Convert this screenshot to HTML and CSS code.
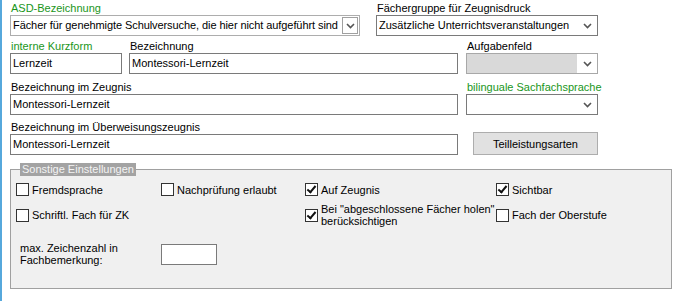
FILE: index.html
```html
<!DOCTYPE html>
<html lang="de">
<head>
    <meta charset="UTF-8">
    <title>Fach bearbeiten</title>
    <link rel="stylesheet" href="styles.css">
</head>
<body>
    <div class="panel">
        <!-- Zeile 1 -->
        <div class="row row-1">
            <div class="field w-asd">
                <label class="green">ASD-Bezeichnung</label>
                <div class="select light">
                    <span class="value tight">Fächer für genehmigte Schulversuche, die hier nicht aufgeführt sind</span>
                    <span class="drop-btn">
                        <svg width="9" height="6" viewBox="0 0 9 6"><path d="M1 1 L4.5 4.5 L8 1" fill="none" stroke="#555" stroke-width="1.6"/></svg>
                    </span>
                </div>
            </div>
            <div class="field w-gruppe">
                <label>Fächergruppe für Zeugnisdruck</label>
                <div class="select">
                    <span class="value">Zusätzliche Unterrichtsveranstaltungen</span>
                    <span class="arrow">
                        <svg width="9" height="6" viewBox="0 0 9 6"><path d="M1 1 L4.5 4.5 L8 1" fill="none" stroke="#555" stroke-width="1.6"/></svg>
                    </span>
                </div>
            </div>
        </div>

        <!-- Zeile 2 -->
        <div class="row row-2">
            <div class="field w-kurz">
                <label class="green">interne Kurzform</label>
                <div class="input">Lernzeit</div>
            </div>
            <div class="field w-bez">
                <label>Bezeichnung</label>
                <div class="input">Montessori-Lernzeit</div>
            </div>
            <div class="field w-right">
                <label>Aufgabenfeld</label>
                <div class="select disabled">
                    <span class="value"></span>
                    <span class="arrow white">
                        <svg width="9" height="6" viewBox="0 0 9 6"><path d="M1 1 L4.5 4.5 L8 1" fill="none" stroke="#555" stroke-width="1.6"/></svg>
                    </span>
                </div>
            </div>
        </div>

        <!-- Zeile 3 -->
        <div class="row row-3">
            <div class="field w-wide">
                <label>Bezeichnung im Zeugnis</label>
                <div class="input">Montessori-Lernzeit</div>
            </div>
            <div class="field w-right">
                <label class="green">bilinguale Sachfachsprache</label>
                <div class="select">
                    <span class="value"></span>
                    <span class="arrow">
                        <svg width="9" height="6" viewBox="0 0 9 6"><path d="M1 1 L4.5 4.5 L8 1" fill="none" stroke="#555" stroke-width="1.6"/></svg>
                    </span>
                </div>
            </div>
        </div>

        <!-- Zeile 4 -->
        <div class="row row-4">
            <div class="field w-wide">
                <label>Bezeichnung im Überweisungszeugnis</label>
                <div class="input">Montessori-Lernzeit</div>
            </div>
            <button class="btn">Teilleistungsarten</button>
        </div>

        <fieldset class="group">
            <legend>Sonstige Einstellungen</legend>
            <div class="checks">
                <div class="check"><span class="box"></span>Fremdsprache</div>
                <div class="check"><span class="box"></span>Nachprüfung erlaubt</div>
                <div class="check"><span class="box checked"></span>Auf Zeugnis</div>
                <div class="check"><span class="box checked"></span>Sichtbar</div>

                <div class="check"><span class="box"></span>Schriftl. Fach für ZK</div>
                <div></div>
                <div class="check"><span class="box checked"></span><span>Bei "abgeschlossene Fächer holen"<br>berücksichtigen</span></div>
                <div class="check"><span class="box"></span>Fach der Oberstufe</div>

                <div class="max-label">max. Zeichenzahl in<br>Fachbemerkung:</div>
                <div class="input small"></div>
            </div>
        </fieldset>
    </div>
</body>
</html>
```

FILE: styles.css
```css
body {
    margin: 0;
    background-color: white;
    font-family: 'Liberation Sans', Arial, sans-serif;
    font-size: 11px;
    color: #000;
}

.panel {
    border-left: 2px solid #56a8dc;
    min-height: 301px;
    box-sizing: border-box;
    padding: 2px 0 0 8px;
}

.row {
    display: flex;
    align-items: flex-start;
}

.row-2 { margin-top: 4px; }
.row-3 { margin-top: 7px; }
.row-4 { margin-top: 6px; }

.field {
    display: flex;
    flex-direction: column;
}

.field label {
    height: 13px;
    line-height: 13px;
    padding-left: 1px;
    white-space: nowrap;
}

.green {
    color: #1a961a;
}

.w-asd { width: 350px; margin-right: 16px; }
.w-gruppe { width: 222px; }
.w-kurz { width: 112px; margin-right: 7px; }
.w-bez { width: 329px; margin-right: 8px; }
.w-wide { width: 448px; margin-right: 8px; }
.w-right { width: 132px; }

.input,
.select {
    height: 21px;
    box-sizing: border-box;
    border: 1px solid #7a7a7a;
    background-color: white;
    line-height: 19px;
    padding-left: 2px;
    white-space: nowrap;
    overflow: hidden;
}

.select {
    display: flex;
    align-items: center;
    padding-right: 0;
}

.select .value {
    flex: 1;
    min-width: 0;
    overflow: hidden;
    line-height: 19px;
}

.select .value.tight {
    letter-spacing: -0.08px;
}

.select.light {
    border-color: #adadad;
}

.select.disabled {
    background-color: #d9d9d9;
    border-color: #a8a8a8;
}

.arrow {
    width: 20px;
    height: 19px;
    flex: none;
    display: flex;
    align-items: center;
    justify-content: center;
}

.arrow.white {
    background-color: white;
}

.drop-btn {
    width: 14px;
    height: 15px;
    flex: none;
    margin: 0 1px 0 2px;
    border: 1px solid #a0a0a0;
    display: flex;
    align-items: center;
    justify-content: center;
    background-color: white;
}

.btn {
    margin: 11px 0 0 7px;
    width: 125px;
    height: 23px;
    background-color: #e1e1e1;
    border: 1px solid #adadad;
    font-family: inherit;
    font-size: 11px;
    padding: 0;
}

.group {
    margin: 8px 0 0 0;
    width: 662px;
    height: 126px;
    box-sizing: border-box;
    border: 1px solid #a0a0a0;
    background-color: #f0f0f0;
    padding: 0;
}

.group legend {
    margin-left: 9px;
    padding: 0 2px;
    background-color: #a3a3a3;
    color: #f4f4f4;
    line-height: 13px;
    height: 13px;
}

.checks {
    display: grid;
    grid-template-columns: 145px 144px 191px 1fr;
    grid-template-rows: 13px 26px 26px;
    row-gap: 6px;
    padding: 7px 0 0 5px;
    align-items: center;
}

.checks .max-label {
    margin-top: 13px;
    padding-left: 4px;
    line-height: 12px;
}

.check {
    display: flex;
    align-items: center;
    line-height: 12px;
}

.box {
    width: 13px;
    height: 13px;
    box-sizing: border-box;
    border: 1px solid #333;
    background-color: white;
    margin-right: 3px;
    flex: none;
    position: relative;
}

.box.checked::after {
    content: '';
    position: absolute;
    left: 3px;
    top: 0px;
    width: 3px;
    height: 7px;
    border: solid #111;
    border-width: 0 2.5px 2.5px 0;
    transform: rotate(40deg);
}

.input.small {
    width: 56px;
    margin-top: 14px;
}
```
